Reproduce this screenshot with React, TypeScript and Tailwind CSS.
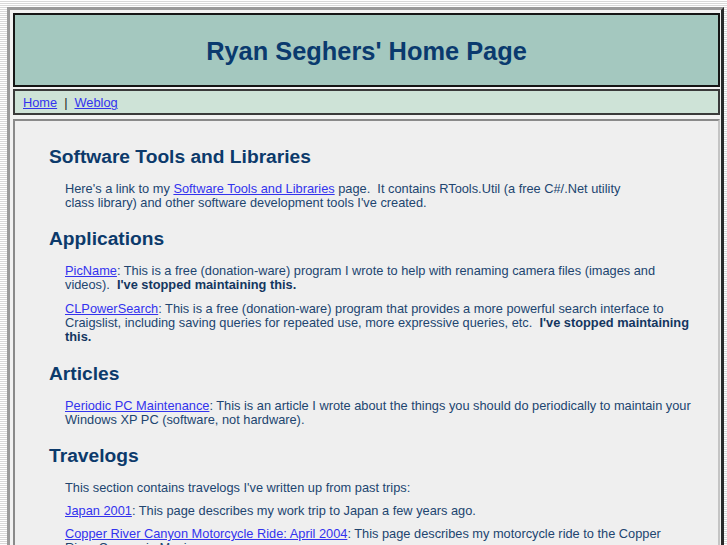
import React from "react";

const linkCls = "text-[#3333ee] underline";
const pCls = "mb-[9px] text-[12.8px] leading-[14px] text-[#21456f]";
const hCls = "text-[19.2px] leading-[22px] font-bold text-[#0c3a6b]";

export default function App() {
  return (
    <div
      className="min-h-screen w-full overflow-hidden pt-[7px] pl-[7px] bg-[repeating-linear-gradient(to_bottom,#ffffff_0px,#ffffff_1px,#d9d9d9_1px,#d9d9d9_2px)]"
      style={{ fontFamily: '"Liberation Sans", Arial, Helvetica, sans-serif' }}
    >
      <div className="w-[717px] border-[3px] border-t-[#9a9a9a] border-l-[#9a9a9a] border-r-[#2a2a2a] border-b-[#2a2a2a] bg-[#f2f2f2] p-[3px] pr-[1px]">
        <div className="flex h-[74px] items-center justify-center border-2 border-[#151515] bg-[#a4c8bf] pt-[2px]">
          <h1 className="text-[25.4px] font-bold text-[#0a3a6e]">Ryan Seghers' Home Page</h1>
        </div>
        <div className="mt-[2px] flex h-[26px] items-center border-2 border-[#3a3a3a] bg-[#cee3d7] pl-[8px] pt-[2px] text-[12.8px] text-[#222]">
          <a className={linkCls} href="#">Home</a>
          <span className="mx-[7px]">|</span>
          <a className={linkCls} href="#">Weblog</a>
        </div>
        <div className="mt-[4px] border-2 border-t-[#8a8a8a] border-l-[#8a8a8a] border-r-[#c4c4c4] border-b-[#c4c4c4] bg-[#efefef] pl-[34px] pr-[25px] pt-[25px] pb-[40px]">
          <h2 className={hCls + " mb-[14px]"}>Software Tools and Libraries</h2>
          <div className="pl-[16px]">
            <p className={pCls}>
              Here's a link to my <a className={linkCls} href="#">Software Tools and Libraries</a> page.&nbsp; It contains RTools.Util (a free C#/.Net utility
              <br />
              class library) and other software development tools I've created.
            </p>
          </div>

          <h2 className={hCls + " mt-[18px] mb-[14px]"}>Applications</h2>
          <div className="pl-[16px]">
            <p className={pCls + " mb-[10px]"}>
              <a className={linkCls} href="#">PicName</a>: This is a free (donation-ware) program I wrote to help with renaming camera files (images and videos).&nbsp; <b className="text-[#14365f]">I've stopped maintaining this.</b>
            </p>
            <p className={pCls}>
              <a className={linkCls} href="#">CLPowerSearch</a>: This is a free (donation-ware) program that provides a more powerful search interface to Craigslist, including saving queries for repeated use, more expressive queries, etc.&nbsp; <b className="text-[#14365f]">I've stopped maintaining this.</b>
            </p>
          </div>

          <h2 className={hCls + " mt-[19px] mb-[14px]"}>Articles</h2>
          <div className="pl-[16px]">
            <p className={pCls}>
              <a className={linkCls} href="#">Periodic PC Maintenance</a>: This is an article I wrote about the things you should do periodically to maintain your Windows XP PC (software, not hardware).
            </p>
          </div>

          <h2 className={hCls + " mt-[18px] mb-[14px]"}>Travelogs</h2>
          <div className="pl-[16px]">
            <p className={pCls}>This section contains travelogs I've written up from past trips:</p>
            <p className={pCls + " mb-[8px]"}>
              <a className={linkCls} href="#">Japan 2001</a>: This page describes my work trip to Japan a few years ago.
            </p>
            <p className={pCls}>
              <a className={linkCls} href="#">Copper River Canyon Motorcycle Ride: April 2004</a>: This page describes my motorcycle ride to the Copper River Canyon in Mexico.
            </p>
          </div>
        </div>
      </div>
    </div>
  );
}
